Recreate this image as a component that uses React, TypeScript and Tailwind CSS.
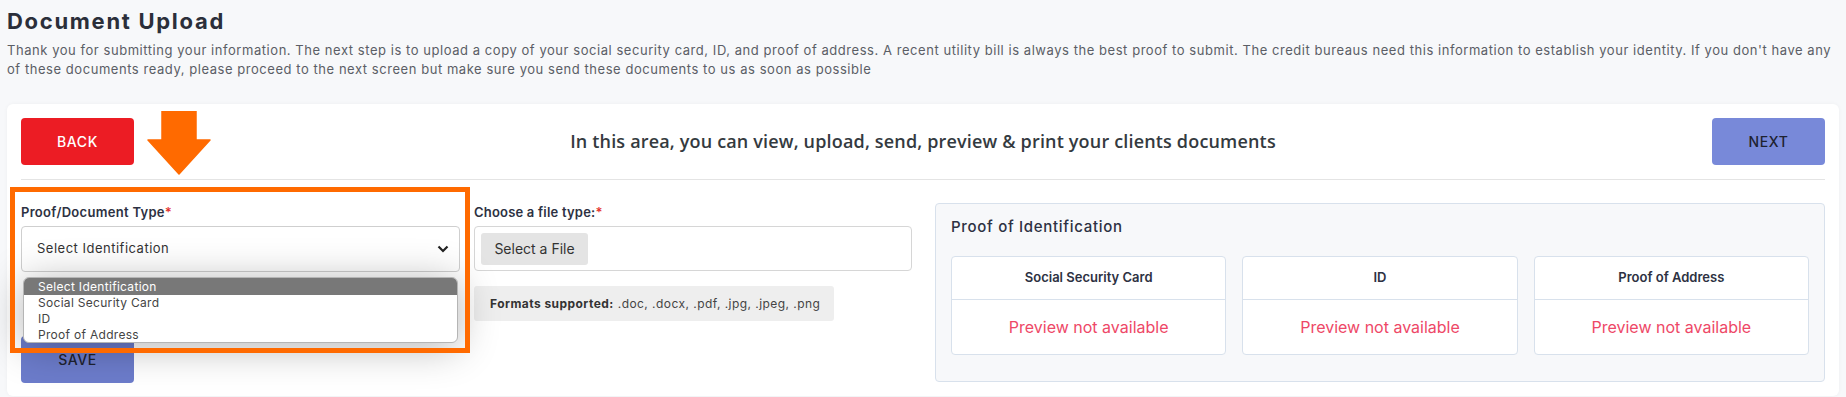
import React from "react";

const Star = () => <span className="text-[#e3342f]">*</span>;

function PreviewCard({ title }: { title: string }) {
  return (
    <div className="bg-white border border-[#d8e1ec] rounded-[4px] flex flex-col">
      <div className="h-[43px] border-b border-[#d8e1ec] flex items-center justify-center text-[13px] font-semibold text-[#2d3142]">
        {title}
      </div>
      <div className="h-[54px] flex items-center justify-center text-[16px] text-[#ee4867]">
        Preview not available
      </div>
    </div>
  );
}

export default function App() {
  return (
    <div className="min-h-[397px] bg-[#f7f8fa] px-[7px] pt-[8px] font-['Inter',sans-serif] overflow-hidden">
      <h1 className="text-[22px] leading-[26px] font-bold text-[#2b2f3a] tracking-[1.7px]">Document Upload</h1>
      <p className="mt-[7px] text-[13px] leading-[19px] text-[#5b5e66] tracking-[0.55px] whitespace-nowrap">
        Thank you for submitting your information. The next step is to upload a copy of your social security card, ID, and proof of address. A recent utility bill is always the best proof to submit. The credit bureaus need this information to establish your identity. If you don't have any
        <br />
        of these documents ready, please proceed to the next screen but make sure you send these documents to us as soon as possible
      </p>

      <div className="relative mt-[25px] bg-white rounded-[6px] shadow-[0_0_4px_rgba(0,0,0,0.04)] px-[14px] pt-[14px] pb-[13px]">
        {/* header row */}
        <div className="flex items-center justify-between">
          <button className="w-[113px] h-[47px] rounded-[4px] bg-[#ec1c24] text-white text-[14px] font-medium tracking-[0.6px]">
            BACK
          </button>
          <div className="font-['Open_Sans',sans-serif] text-[18px] font-semibold text-[#343a40] tracking-[0.17px]">
            In this area, you can view, upload, send, preview &amp; print your clients documents
          </div>
          <button className="w-[113px] h-[47px] rounded-[4px] bg-[#7889d9] text-[#1e2230] text-[14px] font-medium tracking-[0.6px]">
            NEXT
          </button>
        </div>
        <div className="mt-[14px] border-b border-[#e4e4e4]" />

        {/* form row */}
        <div className="mt-[23px] flex">
          {/* left column */}
          <div className="w-[439px] flex flex-col">
            <label className="text-[13px] leading-[18px] font-semibold text-[#2d3142] tracking-[0.3px]">
              Proof/Document Type<Star />
            </label>
            <div className="relative mt-[5px]">
              <div className="h-[46px] border border-[#cfcfcf] rounded-[4px] flex items-center justify-between pl-[15px] pr-[10px] text-[13px] text-[#333] tracking-[0.5px]">
                <span>Select Identification</span>
                <svg width="12" height="8" viewBox="0 0 12 8">
                  <polyline points="1.5,1.5 6,6 10.5,1.5" fill="none" stroke="#222" strokeWidth="2.2" />
                </svg>
              </div>
              <div className="absolute z-10 left-[2px] top-[51px] w-[435px] bg-white border border-[#b5b5b5] rounded-[6px] overflow-hidden shadow-[0_4px_40px_rgba(0,0,0,0.3)] text-[12px] leading-[16px] tracking-[0.3px]">
                <div className="bg-[#787878] text-white pl-[14px] h-[17px] flex items-center">Select Identification</div>
                <div className="text-[#444] pl-[14px] h-[16px] flex items-center">Social Security Card</div>
                <div className="text-[#444] pl-[14px] h-[16px] flex items-center">ID</div>
                <div className="text-[#444] pl-[14px] h-[15px] flex items-center">Proof of Address</div>
              </div>
            </div>
            <button className="mt-[64px] w-[113px] h-[47px] rounded-[4px] bg-[#6c7ccb] text-[#1e2230] text-[14px] font-medium tracking-[0.6px]">
              SAVE
            </button>
          </div>

          {/* middle column */}
          <div className="ml-[14px] w-[438px] flex flex-col">
            <label className="text-[13px] leading-[18px] font-semibold text-[#2d3142] tracking-[0.2px]">
              Choose a file type:<Star />
            </label>
            <div className="mt-[5px] h-[45px] border border-[#d6d6d6] rounded-[4px] flex items-center pl-[6px]">
              <div className="h-[32px] w-[107px] bg-[#e4e4e4] rounded-[3px] flex items-center justify-center text-[14px] text-[#333]">
                Select a File
              </div>
            </div>
            <div className="mt-[15px] w-[360px] h-[35px] bg-[#eeeeee] rounded-[3px] flex items-center pl-[16px] text-[12px] text-[#444] tracking-[0.45px]">
              <span className="font-bold text-[#333]">Formats supported:</span>
              <span className="ml-[4px]">.doc, .docx, .pdf, .jpg, .jpeg, .png</span>
            </div>
          </div>

          {/* right panel */}
          <div className="ml-[23px] flex-1 h-[179px] bg-[#f7f8fa] border border-[#d8e1ec] rounded-[4px] px-[15px] pt-[13px]">
            <div className="text-[15px] leading-[20px] font-medium text-[#2d3142] tracking-[0.7px]">Proof of Identification</div>
            <div className="mt-[19px] grid grid-cols-3 gap-[16px]">
              <PreviewCard title="Social Security Card" />
              <PreviewCard title="ID" />
              <PreviewCard title="Proof of Address" />
            </div>
          </div>
        </div>

        {/* annotation overlays */}
        <div className="absolute left-[3px] top-[83px] w-[460px] h-[166px] border-[5px] border-[#ff6a00] pointer-events-none z-20" />
        <svg className="absolute left-[140px] top-[7px] z-20" width="64" height="64" viewBox="0 0 64 64">
          <polygon points="15,0 49,0 49,29 63,29 32,63 1,29 15,29" fill="#ff6a00" stroke="#ff6a00" strokeWidth="1.5" strokeLinejoin="round" />
        </svg>
      </div>
    </div>
  );
}
